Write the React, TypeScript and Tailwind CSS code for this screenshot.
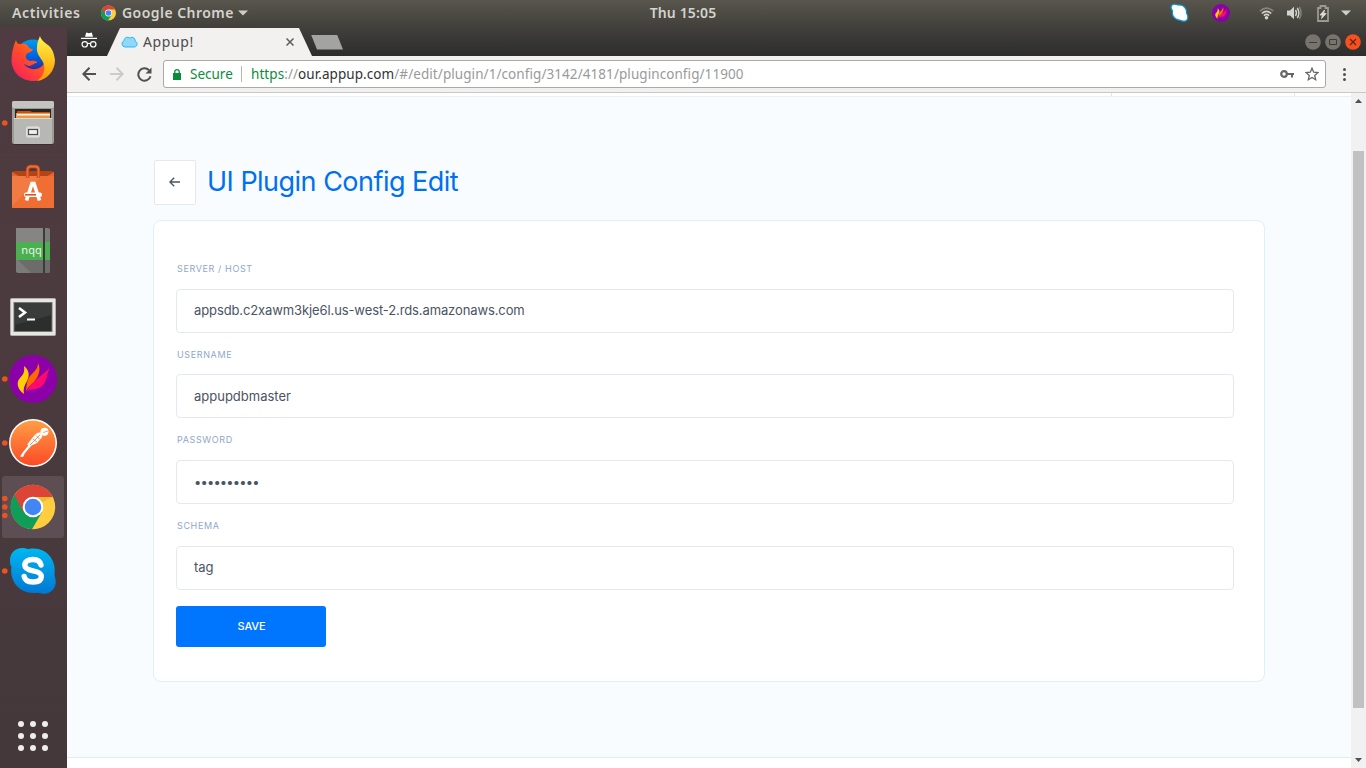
import React from "react";

const ChromeLogo = ({ cx, cy, r }: { cx: number; cy: number; r: number }) => (
  <g transform={`translate(${cx} ${cy}) scale(${r / 22})`}>
    <circle r="22" fill="#ffcd40" />
    <path d="M-18.500 -12 A22 22 0 0 0 -1 22 L9 5 L0 -10 Z" fill="#0f9d58" />
    <path d="M-18.500 -12 A22 22 0 0 1 19.600 -10 L0 -10 L-9.500 5 Z" fill="#db4437" />
    <path d="M0 -10 L19.600 -10 L9 -5 Z" fill="#e0a82a" opacity=".5" />
    <circle r="10.200" fill="#fff" />
    <circle r="8.200" fill="#4285f4" />
  </g>
);

const FlameLogo = ({ cx, cy, r }: { cx: number; cy: number; r: number }) => (
  <g transform={`translate(${cx} ${cy}) scale(${r / 24})`}>
    <circle r="24" fill="#8b00a8" />
    <path d="M-7 13 C-4 9 -3 6 0 4 C4 -1 11 -5 16.500 -11 C14 -5 14 1 10 6 C5 12 -2 9 -7 13Z" fill="#ff0a6c" />
    <path d="M-7 12 C-6 4 -6 0 -2 -4 C2 -8 5 -11 5 -16 C8 -10 6 -4 3 0 C0 5 -4 6 -7 12Z" fill="#ff6a00" />
    <path d="M-9 15 C-16 10 -17 3 -13 -1 C-10 -4 -8 -7 -9 -13 C-4 -9 -3 -4 -6 2 C-9 7 -10 10 -9 15Z" fill="#ffcf00" />
  </g>
);

const Firefox = () => (
  <>
    <defs>
      <linearGradient id="fx" x1="0" y1="1" x2="1" y2="0">
        <stop offset="0" stopColor="#f5156c" />
        <stop offset=".45" stopColor="#ff4b2b" />
        <stop offset="1" stopColor="#ff9800" />
      </linearGradient>
      <linearGradient id="fxy" x1="0" y1="0" x2="0" y2="1">
        <stop offset="0" stopColor="#fff44f" />
        <stop offset=".55" stopColor="#ffc21c" />
        <stop offset="1" stopColor="#ff9408" />
      </linearGradient>
      <linearGradient id="fxb" x1="0" y1="0" x2="0" y2="1">
        <stop offset="0" stopColor="#009cec" />
        <stop offset=".5" stopColor="#0060df" />
        <stop offset="1" stopColor="#3b1a80" />
      </linearGradient>
    </defs>
    <circle cx="33" cy="30" r="17.500" fill="url(#fxb)" />
    <path d="M16 13 C17 17 19 17 20 17 C23 16 26 16 28 19 C29 22 32 22 33 22 C32 26 27 25 26 28 C25 32 28 33.500 31 34 C35 33.500 37 34 37 36 C34 36 33 38 30 39 C27 39 25 37 24 37 C28 44 41 44 44 36 L54 37 C51 48 43 54 33.500 54 C21 54 12 45 11.500 34 C11.400 27 13 19 16 13Z" fill="url(#fx)" />
    <path d="M40 9 C41 13 45 16 48 18 C53 22 54 27 55 33 C55 44 47 53 37 54 C44 49 46 41 43 35 C41 31 36 27 37 20 C37 15 39 12 40 9Z" fill="url(#fxy)" />
  </>
);

const Files = () => (
  <>
    <rect x="12" y="10" width="42" height="43" rx="2" fill="#9b9b98" />
    <rect x="12" y="10" width="42" height="7" rx="2" fill="#c4c4c1" />
    <rect x="15" y="18" width="36" height="10" fill="#292624" />
    <path d="M17 20h13l2 1h18v4H17z" fill="#c5501d" />
    <path d="M16 22h34v6H16z" fill="#ee9747" />
    <path d="M17 23h33v1.500H17z" fill="#fff6e6" />
    <rect x="14" y="27" width="38" height="26" rx="1" fill="#b7b7b4" />
    <path d="M14 27.500h38" stroke="#d8d8d5" />
    <rect x="26.500" y="36" width="13" height="10" rx="1.500" fill="#d6d6d4" stroke="#e4e4e2" strokeWidth="1" />
    <rect x="28.500" y="38.500" width="9" height="5" fill="#f1f1ef" stroke="#4d4d4b" strokeWidth="1.200" />
    <path d="M13 53.500h40" stroke="#3a2e31" />
  </>
);

const Software = () => (
  <>
    <path d="M12 17l3-1h36l3 1v4H12z" fill="#b54414" />
    <path d="M12 17l8 5H12z M54 17l-8 5h8z" fill="#e8642e" />
    <rect x="12" y="21" width="42" height="32" rx=".5" fill="#ee6e33" />
    <path d="M12 21h30L12 51z" fill="#f38b55" opacity=".45" />
    <path d="M27.500 23v-8q0-3.500 3.500-3.500h4q3.500 0 3.500 3.500v8" fill="none" stroke="#c4471a" strokeWidth="3.400" />
    <path d="M27.500 23v-8q0-3.500 3.500-3.500h4q3.500 0 3.500 3.500v8" fill="none" stroke="#ee6c34" strokeWidth="1.800" />
    <path d="M26.500 45.500l5.500-17h2l5.500 17" fill="none" stroke="#fff" strokeWidth="3.600" />
    <rect x="24" y="37.500" width="18" height="4.500" rx="2" fill="#fff" />
    <rect x="25" y="39" width="11" height="1.600" fill="#dd541e" />
  </>
);

const Notebook = () => (
  <>
    <rect x="16" y="9" width="34" height="45" rx="2" fill="#7b7b7a" />
    <path d="M18 41h32v11q0 2-2 2H31z" fill="#6c6c6b" />
    <path d="M16 9h27v14H16z" fill="#858584" />
    <rect x="16" y="23" width="34" height="18" fill="#4caf50" />
    <rect x="43" y="9" width="2" height="45" fill="#3b3b3b" />
    <text x="31.500" y="34.800" textAnchor="middle" fontSize="11" fill="#e9f6e9" fontFamily="Noto Sans, sans-serif">nqq</text>
  </>
);

const Terminal = () => (
  <>
    <rect x="10.500" y="15.500" width="45" height="37" rx="1" fill="#e6e6e4" stroke="#b0b0ad" />
    <rect x="13.500" y="19" width="39" height="30" fill="#777" />
    <rect x="14.500" y="20" width="37" height="28" fill="#2c2d2d" />
    <path d="M14.500 20h37v12L14.500 42z" fill="#444545" opacity=".6" />
    <path d="M19 25l6 4.500l-6 4.500" fill="none" stroke="#fff" strokeWidth="2.600" />
    <path d="M27 36.500h8" stroke="#fff" strokeWidth="2" />
  </>
);

const Postman = () => (
  <>
    <defs>
      <linearGradient id="pm" x1="0" y1="0" x2="0" y2="1">
        <stop offset="0" stopColor="#ff9d45" />
        <stop offset="1" stopColor="#fb4b26" />
      </linearGradient>
    </defs>
    <circle cx="33" cy="32" r="24" fill="#fff" />
    <circle cx="33" cy="32" r="22.500" fill="url(#pm)" />
    <circle cx="44.500" cy="20.800" r="4" fill="#fff" />
    <path d="M43 21.500l5-1.500" stroke="#f58a45" strokeWidth=".8" />
    <path d="M41 21.500C37 21 35.500 23 33 26L27.500 33L28 35L23 41L20 45.500L23 46L25 42L31.500 34.500L37 32L41.500 27L42.500 24Z" fill="#fff" />
    <path d="M40 24L30 34M36 24.500l4 4M33 28l4 3" stroke="#fb7636" strokeWidth=".8" />
  </>
);

const Skype = () => (
  <>
    <defs>
      <linearGradient id="sk" x1="0" y1="0" x2="0" y2="1">
        <stop offset="0" stopColor="#00b7f0" />
        <stop offset="1" stopColor="#0078d4" />
      </linearGradient>
    </defs>
    <path d="M22 9 C25 8.500 27 10 29 10 C44 7 57 19 54.500 36 C55 39 56 41 55.700 44 C55 51 49 55.500 43 54.700 C41 54.500 39 53.500 37 53.700 C22 56 9 44 11.500 28 C10 26 10 23 10 21 C10 14 15 9 22 9Z" fill="url(#sk)" />
    <path d="M41 26C40 21.500 37 20.500 33 20.500C28 20.500 24.800 22.500 24.800 26C24.800 30 28.500 31 33 31.800C38.500 32.800 41.300 34.200 41.300 37.500C41.300 41.500 37.500 43 33 43C28 43 25 41.500 24.200 37.500" fill="none" stroke="#fff" strokeWidth="5.400" strokeLinecap="round" />
  </>
);

const dock: { name: string; dots: number[]; art: React.ReactNode }[] = [
  { name: "Firefox", dots: [], art: <Firefox /> },
  { name: "Files", dots: [32], art: <Files /> },
  { name: "Software", dots: [], art: <Software /> },
  { name: "Notepadqq", dots: [], art: <Notebook /> },
  { name: "Terminal", dots: [], art: <Terminal /> },
  { name: "Flame", dots: [32], art: <FlameLogo cx={33} cy={32} r={24} /> },
  { name: "Postman", dots: [32], art: <Postman /> },
  {
    name: "Chrome",
    dots: [23.5, 32, 40.5],
    art: (
      <>
        <rect x="2" y="1" width="62" height="62" rx="3" fill="#5c4e52" />
        <ChromeLogo cx={33} cy={32} r={22.200} />
      </>
    ),
  },
  { name: "Skype", dots: [32], art: <Skype /> },
];

function TopBar() {
  return (
    <header className="flex h-[28px] shrink-0 items-start bg-linear-to-b from-[#58564d] to-[#403f3a] font-['Noto_Sans',sans-serif] text-[14px] font-semibold leading-[26px] text-[#d5d3cd]">
      <div className="grid h-[27px] w-full grid-cols-[1fr_68px_1fr]">
        <div className="flex h-[26px] items-center pl-3">
          <span className="w-[89px] whitespace-nowrap tracking-[0.6px]">Activities</span>
          <svg className="size-[16px] shrink-0" viewBox="0 0 16 16"><ChromeLogo cx={7.500} cy={8} r={7.500} /></svg>
          <span className="ml-[5px] w-[111px] whitespace-nowrap tracking-[0.45px]">Google Chrome</span>
          <svg className="ml-[5px] h-[6px] w-[10px]" viewBox="0 0 10 6"><path d="M0 .5h10L5 5.500z" fill="#cfcdc7" /></svg>
        </div>
        <div className="whitespace-nowrap text-center tracking-[0.15px]">Thu 15:05</div>
        <div className="flex h-[26px] items-center justify-end pr-[15px]">
          <svg className="mr-[22px] size-[20px]" viewBox="0 0 20 20">
            <path d="M2 2C4 0 7 2 9 2C14 1.500 17 6 16.500 10C18.500 13 18.500 17 15.500 18C12 19 11 17 8.500 17C4 16 1.500 12 2.500 8C1 6 .5 3.500 2 2Z" fill="#fff" stroke="#0a91c8" strokeWidth="1.300" />
          </svg>
          <svg className="mr-[29px] size-[18px]" viewBox="0 0 18 18"><FlameLogo cx={9} cy={9} r={9} /></svg>
          <svg className="mr-[12px] h-[14px] w-[15px]" viewBox="0 0 16 14" fill="none" strokeWidth="1.700">
            <path d="M1 5Q8-1.500 15 5" stroke="#85837c" />
            <path d="M3 7.500Q8 3 13 7.500M5.200 9.700Q8 7.300 10.800 9.700" stroke="#d5d3cd" />
            <circle cx="8" cy="12" r="1.900" fill="#d5d3cd" />
          </svg>
          <svg className="mr-[15px] h-[14px] w-[16px]" viewBox="0 0 16 14" fill="none" strokeWidth="1.400">
            <path d="M1 4.500h3L8 .8v12.400L4 9.500H1z" fill="#d5d3cd" />
            <path d="M9.500 4q2 3 0 6M11.300 2q3.200 5 0 10" stroke="#d5d3cd" />
            <path d="M13.300 .8q3.600 6.200 0 12.400" stroke="#85837c" />
          </svg>
          <svg className="mr-[12px] h-[17px] w-[12px]" viewBox="0 0 12 17">
            <path d="M1 3h2.500V1h5v2H11v13H1z" fill="none" stroke="#9b9992" strokeWidth="1.800" />
            <path d="M7.500 5L3 10h2.500L4.500 13.500L9.200 8.500H6.700z" fill="#dfddd7" stroke="#dfddd7" strokeWidth=".8" />
          </svg>
          <svg className="h-[6px] w-[10px]" viewBox="0 0 10 6"><path d="M0 .5h10L5 5.500z" fill="#cfcdc7" /></svg>
        </div>
      </div>
    </header>
  );
}

function Dock() {
  return (
    <nav className="-mt-px flex w-[67px] shrink-0 flex-col bg-linear-to-b from-[#4f3b41] via-[#4a3a3e] to-[#44383b]">
      {dock.map((d) => (
        <svg key={d.name} aria-label={d.name} className="h-[64px] w-[67px] shrink-0" viewBox="0 0 67 64">
          {d.art}
          {d.dots.map((y) => <circle key={y} cx="4.800" cy={y} r="2.800" fill="#e95420" />)}
        </svg>
      ))}
      <div className="mt-auto mb-[17px] ml-[18px] grid w-[30px] grid-cols-3 gap-[6px]">
        {Array.from({ length: 9 }, (_, i) => <i key={i} className="size-[6px] rounded-full bg-[#eeeeec]" />)}
      </div>
    </nav>
  );
}

function TabStrip() {
  return (
    <div className="flex h-[28px] shrink-0 items-center bg-linear-to-b from-[#403f3d] to-[#2d2d2b]">
      <svg className="mb-[3px] ml-[14px] h-[17px] w-[16px] shrink-0" viewBox="0 0 17 18">
        <path d="M4.300 5L5.300 1.200Q5.700.2 6.700.7L8.500 1.300L10.300.7Q11.300.2 11.700 1.200L12.700 5z M0 6.200h17v1.300H0z" fill="#fff" />
        <g fill="none" stroke="#fff" strokeWidth="1.300">
          <circle cx="4" cy="13" r="2.900" />
          <circle cx="13" cy="13" r="2.900" />
          <path d="M6.900 12.500q1.600-1 3.200 0" />
        </g>
      </svg>
      <div className="ml-[10px] flex h-[28px] w-[205px] shrink-0 items-center bg-[#f2f1f0] pl-[14px] [clip-path:polygon(0_100%,13px_0,192px_0,205px_100%)]">
        <svg className="h-[12px] w-[17px]" viewBox="0 0 17 12">
          <path d="M4 11A3.300 3.300 0 0 1 3 4.700C3.200 1.500 6.500.2 9 2.200C11.500.2 14.500 2 14 5C17 6 16.800 10.500 13.500 11Z" fill="#8fd8f8" stroke="#29b6f6" />
        </svg>
        <span className="ml-[5px] w-[143px] pb-px font-['Noto_Sans',sans-serif] text-[14px] tracking-[0.6px] text-[#4c4c4c]">Appup!</span>
        <svg className="size-[8px]" viewBox="0 0 8 8"><path d="M.5.5l7 7M7.500.5l-7 7" stroke="#5c5c5c" strokeWidth="1.500" /></svg>
      </div>
      <div className="-ml-px h-[15px] w-[32px] bg-[#a3a3a2] [clip-path:polygon(0_0,26px_0,100%_100%,6px_100%)]" />
      <div className="ml-auto flex gap-1 pr-[5px]">
        <svg className="size-[16px]" viewBox="0 0 16 16"><circle cx="8" cy="8" r="7.800" fill="#76746c" /><path d="M4 8.500h8" stroke="#3c3b37" /></svg>
        <svg className="size-[16px]" viewBox="0 0 16 16"><circle cx="8" cy="8" r="7.800" fill="#76746c" /><path d="M4.500 5.500h7v5h-7z" fill="none" stroke="#3c3b37" /></svg>
        <svg className="size-[16px]" viewBox="0 0 16 16"><circle cx="8" cy="8" r="7.800" fill="#f5501f" /><path d="M5 5l6 6M11 5l-6 6" stroke="#5c2410" strokeWidth="1.200" /></svg>
      </div>
    </div>
  );
}

function Toolbar() {
  return (
    <div className="flex h-[37px] shrink-0 items-center border-b border-[#c9c9c8] bg-[#f2f1f0] font-['Noto_Sans',sans-serif]">
      <svg className="ml-[15px] size-[14px]" viewBox="0 0 14 14"><path d="M14 7H1.500M7.500.8L1.300 7l6.200 6.200" fill="none" stroke="#505050" strokeWidth="2" /></svg>
      <svg className="ml-[14px] size-[14px]" viewBox="0 0 14 14"><path d="M0 7h12.500M6.500.8L12.700 7l-6.200 6.200" fill="none" stroke="#cbcbca" strokeWidth="2" /></svg>
      <svg className="ml-[13px] size-[15px]" viewBox="0 0 15 15">
        <path d="M12 3.200A6.200 6.200 0 1 0 13.500 9.200" fill="none" stroke="#505050" strokeWidth="2" />
        <path d="M14.500.5v6h-6z" fill="#505050" />
      </svg>
      <div className="ml-[11px] flex h-[28px] w-[1163px] items-center rounded-[3px] border border-[#a9a9a8] bg-white text-[13.5px] whitespace-nowrap">
        <svg className="ml-[9px] h-[11px] w-[8px]" viewBox="0 0 8 11"><path d="M0 4h8v7H0z" fill="#0b8c3c" /><path d="M1.800 4.500V2.700q0-2 2.200-2t2.200 2v1.800" fill="none" stroke="#0b8c3c" strokeWidth="1.300" /></svg>
        <span className="ml-[9px] w-[51px] text-[#0b8c3c]">Secure</span>
        <i className="h-[16px] w-px bg-[#b5b5b5]" />
        <span className="ml-[9px] tracking-[0.07px] text-[#9a9a9a]"><span className="text-[#0b8c3c]">https</span>://<span className="text-[#333]">our.appup.com</span>/#/edit/plugin/1/config/3142/4181/pluginconfig/11900</span>
        <svg className="ml-auto h-[8px] w-[15px]" viewBox="0 0 15 8"><circle cx="4" cy="4" r="2.800" fill="none" stroke="#666" strokeWidth="2.200" /><path d="M7 4h7M12 4v3.500" stroke="#666" strokeWidth="2" /></svg>
        <svg className="mr-[6px] ml-[10px] size-[14px]" viewBox="0 0 14 14"><path d="M7 1.200l1.700 4 4.300.4-3.300 2.900 1 4.200L7 10.500l-3.700 2.200 1-4.200L1 5.600l4.300-.4z" fill="none" stroke="#666" strokeWidth="1.300" /></svg>
      </div>
      <div className="ml-[17px] flex flex-col gap-[2px]">
        {[0, 1, 2].map((i) => <i key={i} className="size-[3px] rounded-full bg-[#505050]" />)}
      </div>
    </div>
  );
}

const fields = [
  { label: "SERVER / HOST", value: "appsdb.c2xawm3kje6l.us-west-2.rds.amazonaws.com", type: "text", box: "h-[86px]", labelBox: "h-[28px]", input: "tracking-[-0.11px] pb-[2px]" },
  { label: "USERNAME", value: "appupdbmaster", type: "text", box: "h-[85px]", labelBox: "h-[27px]", input: "pb-0" },
  { label: "PASSWORD", value: "**********", type: "password", box: "h-[86px]", labelBox: "h-[28px]", input: "tracking-[-0.85px] pb-0" },
  { label: "SCHEMA", value: "tag", type: "text", box: "h-[85px]", labelBox: "h-[28px]", input: "pb-[2px]" },
];

function Page() {
  return (
    <div className="flex min-h-0 flex-1">
      <main className="flex min-w-0 flex-1 flex-col bg-[#f8fcff] font-['Inter',sans-serif]">
        <div className="flex h-[4px] shrink-0 justify-end border-b border-[#e6f1fc] bg-white pr-[56px]">
          <div className="w-[184px] border-x border-[#e4e8ee]" />
        </div>
        <div className="mt-[63px] ml-[87px] flex h-[45px] items-center">
          <button className="flex h-[45px] w-[42px] items-center justify-center rounded-[2px] border border-[#e3e8f1] bg-white pr-px pb-px">
            <svg className="h-[10px] w-[11px]" viewBox="0 0 11 10"><path d="M11 5H1M5.200.7L.9 5l4.300 4.300" fill="none" stroke="#4a5464" strokeWidth="1.400" /></svg>
          </button>
          <h1 className="ml-[11px] pb-[2px] text-[27px] leading-[40px] tracking-[-0.52px] whitespace-nowrap text-[#0070f0]">UI Plugin Config Edit</h1>
        </div>
        <section className="mt-[15px] ml-[86px] h-[462px] w-[1112px] rounded-[8px] border border-[#e0effe] bg-white px-[22px] pt-[40px]">
          {fields.map((f) => (
            <label key={f.label} className={`${f.box} flex flex-col`}>
              <span className={`${f.labelBox} ml-px text-[9px] leading-[16px] tracking-[0.62px] text-[#8fa8c8]`}>{f.label}</span>
              <input readOnly type={f.type} value={f.value} className={`${f.input} h-[44px] w-[1058px] rounded-[4px] border border-[#e3e8f1] bg-white px-[17px] text-[13px] text-[#4a5464] outline-none`} />
            </label>
          ))}
          <button className="mt-[3px] h-[41px] w-[150px] rounded-[3px] bg-[#0076ff] pl-px text-[11px] font-medium tracking-[-0.1px] text-white">SAVE</button>
        </section>
        <footer className="mt-auto h-[11px] border-t border-[#e0ecfa] bg-white" />
      </main>
      <aside className="flex w-[15px] shrink-0 flex-col items-center bg-[#f1f1f1]">
        <svg className="mt-[6px] h-[4px] w-[7px]" viewBox="0 0 7 4"><path d="M0 4L3.500 0L7 4z" fill="#505050" /></svg>
        <div className="mt-[48px] h-[557px] w-[11px] bg-[#c1c1c1]" />
        <svg className="mt-auto mb-[6px] h-[4px] w-[7px]" viewBox="0 0 7 4"><path d="M0 0h7L3.500 4z" fill="#505050" /></svg>
      </aside>
    </div>
  );
}

export default function App() {
  return (
    <div className="flex h-[768px] w-[1366px] flex-col overflow-hidden">
      <TopBar />
      <div className="flex min-h-0 flex-1">
        <Dock />
        <div className="flex min-w-0 flex-1 flex-col">
          <TabStrip />
          <Toolbar />
          <Page />
        </div>
      </div>
    </div>
  );
}
